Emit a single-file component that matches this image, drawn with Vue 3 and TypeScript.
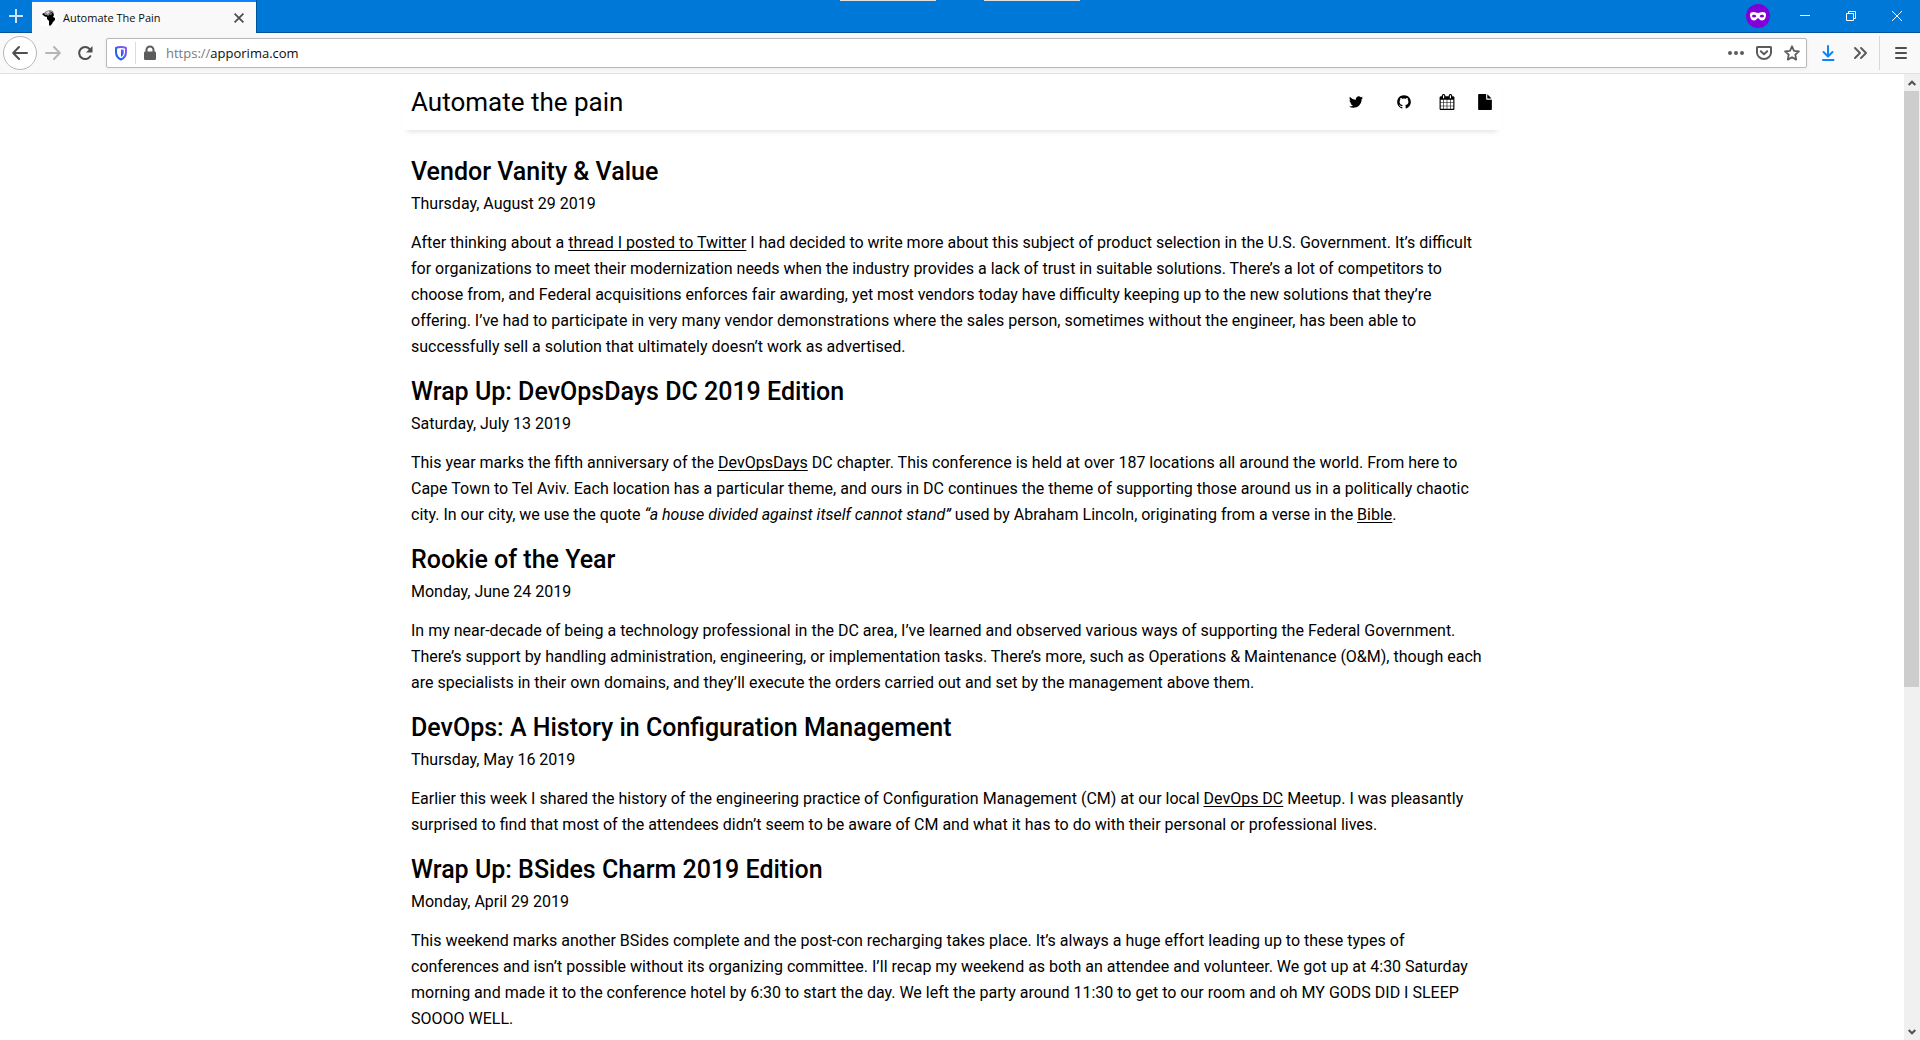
<script setup lang="ts">
interface Piece {
  text: string
  href?: string
  em?: boolean
}

interface Post {
  title: string
  date: string
  body: Piece[]
}

interface SiteLink {
  label: string
  href: string
  brand: boolean
  path: string
}

const siteLinks: SiteLink[] = [
  {
    label: 'Twitter',
    href: '#twitter',
    brand: true,
    path: 'M1684 408q-67 98-162 167 1 14 1 42 0 130-38 259.5t-115.5 248.5-184.5 210.5-258 146-323 54.5q-271 0-496-145 35 4 78 4 225 0 401-138-105-2-188-64.5t-114-159.5q33 5 61 5 43 0 85-11-112-23-185.5-111.5t-73.5-205.5v-4q68 38 146 41-66-44-105-115t-39-154q0-88 44-163 121 149 294.5 238.5t371.5 99.5q-8-38-8-74 0-134 94.5-228.5t228.5-94.5q140 0 236 102 109-21 205-78-37 115-142 178 93-10 186-50z',
  },
  {
    label: 'GitHub',
    href: '#github',
    brand: true,
    path: 'M896 128q209 0 385.5 103t279.5 279.5 103 385.5q0 251-146.5 451.5t-378.5 277.5q-27 5-40-7t-13-30q0-3 .5-76.5t.5-134.5q0-97-52-142 57-6 102.5-18t94-39 81-66.5 53-105 20.5-150.5q0-119-79-206 37-91-8-204-28-9-81 11t-92 44l-38 24q-93-26-192-26t-192 26q-16-11-42.5-27t-83.5-38.5-85-13.5q-45 113-8 204-79 87-79 206 0 85 20.5 150t52.5 105 80.5 67 94 39 102.5 18q-39 36-49 103-21 10-45 15t-57 5-65.5-21.5-55.5-62.5q-19-32-48.5-52t-49.5-24l-20-3q-21 0-29 4.5t-5 11.5 9 14 13 12l7 5q22 10 43.5 38t31.5 51l10 23q13 38 44 61.5t67 30 69.5 7 55.5-3.5l23-4q0 38 .5 88.5t.5 54.5q0 18-13 30t-40 7q-232-77-378.5-277.5t-146.5-451.5q0-209 103-385.5t279.5-279.5 385.5-103z',
  },
  {
    label: 'Calendar',
    href: '#calendar',
    brand: false,
    path: 'M192 1664h288v-288h-288v288zm352 0h320v-288h-320v288zm-352-352h288v-320h-288v320zm352 0h320v-320h-320v320zm-352-384h288v-288h-288v288zm736 736h320v-288h-320v288zm-384-736h320v-288h-320v288zm768 736h288v-288h-288v288zm-384-352h320v-320h-320v320zm-352-864v-288q0-13-9.5-22.5t-22.5-9.5h-64q-13 0-22.5 9.5t-9.5 22.5v288q0 13 9.5 22.5t22.5 9.5h64q13 0 22.5-9.5t9.5-22.5zm736 864h288v-320h-288v320zm-384-384h320v-288h-320v288zm384 0h288v-288h-288v288zm32-480v-288q0-13-9.5-22.5t-22.5-9.5h-64q-13 0-22.5 9.5t-9.5 22.5v288q0 13 9.5 22.5t22.5 9.5h64q13 0 22.5-9.5t9.5-22.5zm384-64v1280q0 52-38 90t-90 38h-1408q-52 0-90-38t-38-90v-1280q0-52 38-90t90-38h128v-96q0-66 47-113t113-47h64q66 0 113 47t47 113v96h384v-96q0-66 47-113t113-47h64q66 0 113 47t47 113v96h128q52 0 90 38t38 90z',
  },
  {
    label: 'Resume',
    href: '#resume',
    brand: false,
    path: 'M1152 512v-472q22 14 36 28l408 408q14 14 28 36h-472zm-128 32q0 40 28 68t68 28h544v1056q0 40-28 68t-68 28h-1344q-40 0-68-28t-28-68v-1600q0-40 28-68t68-28h800v544z',
  },
]

const posts: Post[] = [
  {
    title: 'Vendor Vanity & Value',
    date: 'Thursday, August 29 2019',
    body: [
      { text: 'After thinking about a ' },
      { text: 'thread I posted to Twitter', href: '#thread' },
      {
        text: ' I had decided to write more about this subject of product selection in the U.S. Government. It’s difficult for organizations to meet their modernization needs when the industry provides a lack of trust in suitable solutions. There’s a lot of competitors to choose from, and Federal acquisitions enforces fair awarding, yet most vendors today have difficulty keeping up to the new solutions that they’re offering. I’ve had to participate in very many vendor demonstrations where the sales person, sometimes without the engineer, has been able to successfully sell a solution that ultimately doesn’t work as advertised.',
      },
    ],
  },
  {
    title: 'Wrap Up: DevOpsDays DC 2019 Edition',
    date: 'Saturday, July 13 2019',
    body: [
      { text: 'This year marks the fifth anniversary of the ' },
      { text: 'DevOpsDays', href: '#devopsdays' },
      {
        text: ' DC chapter. This conference is held at over 187 locations all around the world. From here to Cape Town to Tel Aviv. Each location has a particular theme, and ours in DC continues the theme of supporting those around us in a politically chaotic city. In our city, we use the quote ',
      },
      { text: '“a house divided against itself cannot stand”', em: true },
      { text: ' used by Abraham Lincoln, originating from a verse in the ' },
      { text: 'Bible', href: '#bible' },
      { text: '.' },
    ],
  },
  {
    title: 'Rookie of the Year',
    date: 'Monday, June 24 2019',
    body: [
      {
        text: 'In my near-decade of being a technology professional in the DC area, I’ve learned and observed various ways of supporting the Federal Government. There’s support by handling administration, engineering, or implementation tasks. There’s more, such as Operations & Maintenance (O&M), though each are specialists in their own domains, and they’ll execute the orders carried out and set by the management above them.',
      },
    ],
  },
  {
    title: 'DevOps: A History in Configuration Management',
    date: 'Thursday, May 16 2019',
    body: [
      {
        text: 'Earlier this week I shared the history of the engineering practice of Configuration Management (CM) at our local ',
      },
      { text: 'DevOps DC', href: '#devopsdc' },
      {
        text: ' Meetup. I was pleasantly surprised to find that most of the attendees didn’t seem to be aware of CM and what it has to do with their personal or professional lives.',
      },
    ],
  },
  {
    title: 'Wrap Up: BSides Charm 2019 Edition',
    date: 'Monday, April 29 2019',
    body: [
      {
        text: 'This weekend marks another BSides complete and the post-con recharging takes place. It’s always a huge effort leading up to these types of conferences and isn’t possible without its organizing committee. I’ll recap my weekend as both an attendee and volunteer. We got up at 4:30 Saturday morning and made it to the conference hotel by 6:30 to start the day. We left the party around 11:30 to get to our room and oh MY GODS DID I SLEEP SOOOO WELL.',
      },
    ],
  },
]
</script>

<template>
  <div class="browser">
    <header class="titlebar">
      <div class="edge-marks"><span></span><span></span></div>
      <button class="new-tab" type="button" aria-label="New tab">
        <svg width="16" height="16" viewBox="0 0 16 16" fill="none" stroke="#c9e2f7" stroke-width="2">
          <path d="M8 1v14M1 8h14" />
        </svg>
      </button>
      <div class="tab">
        <svg width="16" height="16" viewBox="0 0 16 16" aria-hidden="true">
          <rect width="16" height="16" fill="#fff" />
          <path fill="#8a8a8a" d="M2 4 5 1l4-1 3 1 1 3-4 3-3-1-2 1z" />
          <path
            fill="#000"
            d="M1 4l2-1 1 2 2 0 1 1 2-2 1-2 2 1 1 2-1 2 2 1 0 2-2 2-1 2-2 2-1-1 0-4-2-2 0-2-3-1z"
          />
          <path fill="#d5d5d5" d="M5 2l3-1 0 2-2 1zM9 4l2-1-1 2z" />
        </svg>
        <span class="tab-title">Automate The Pain</span>
        <button class="tab-close" type="button" aria-label="Close tab">
          <svg width="10" height="10" viewBox="0 0 10 10" fill="none" stroke="#4a4a4b" stroke-width="1.7">
            <path d="M.6.6l8.8 8.8M9.4.6.6 9.4" />
          </svg>
        </button>
      </div>
      <div class="window-area">
        <svg class="private" width="24" height="24" viewBox="0 0 24 24" role="img" aria-label="Private browsing">
          <circle cx="12" cy="12" r="12" fill="#8000d7" />
          <path
            fill="#fff"
            fill-rule="evenodd"
            d="M4 10.5C4 8.8 5.5 8 7.5 8c2 0 3 .9 4.5.9S14.5 8 16.5 8c2 0 3.5.8 3.5 2.5 0 3-1.3 6-4 6-2.2 0-2.8-2.3-4-2.3s-1.8 2.3-4 2.3c-2.7 0-4-3-4-6zM5.8 12.2c.6.8 1.4 1.2 2.3 1.2 1 0 1.8-.4 2.3-1.2-.6-.9-1.4-1.4-2.3-1.4-1 0-1.8.5-2.3 1.4zm7.8 0c.5.8 1.3 1.2 2.3 1.2.9 0 1.7-.4 2.3-1.2-.5-.9-1.3-1.4-2.3-1.4-.9 0-1.7.5-2.3 1.4z"
          />
        </svg>
        <button class="win" type="button" aria-label="Minimize">
          <svg width="10" height="10" viewBox="0 0 10 10" fill="none" stroke="#fff"><path d="M0 4.5h10" /></svg>
        </button>
        <button class="win" type="button" aria-label="Restore">
          <svg width="10" height="10" viewBox="0 0 10 10" fill="none" stroke="#fff">
            <path d="M.5 2.5h7v7h-7zM2.5 2.5v-2h7v7h-2" />
          </svg>
        </button>
        <button class="win" type="button" aria-label="Close">
          <svg width="10" height="10" viewBox="0 0 10 10" fill="none" stroke="#fff"><path d="M0 0l10 10M10 0 0 10" /></svg>
        </button>
      </div>
    </header>

    <div class="toolbar">
      <button class="back" type="button" aria-label="Back">
        <svg width="16" height="16" viewBox="0 0 16 16" fill="none" stroke="#4f4f50" stroke-width="2" stroke-linecap="round" stroke-linejoin="round">
          <path d="M15 8H1.5M7 2 1.2 8 7 14" />
        </svg>
      </button>
      <button class="tool" type="button" aria-label="Forward">
        <svg width="16" height="16" viewBox="0 0 16 16" fill="none" stroke="#b5b5b6" stroke-width="2" stroke-linecap="round" stroke-linejoin="round">
          <path d="M1 8h13.5M9 2l5.8 6L9 14" />
        </svg>
      </button>
      <button class="tool" type="button" aria-label="Reload">
        <svg width="16" height="16" viewBox="0 0 16 16" fill="none">
          <path d="M13.3 11.2A6 6 0 1 1 12.6 4" stroke="#4f4f50" stroke-width="2" stroke-linecap="round" />
          <path d="M15.5 1v6.5H9z" fill="#4f4f50" />
        </svg>
      </button>
      <form class="urlbar" @submit.prevent>
        <svg class="shield" width="16" height="16" viewBox="0 0 16 16" aria-hidden="true">
          <defs>
            <linearGradient id="shield-tint" x1="0" y1="1" x2="1" y2="0">
              <stop offset="0" stop-color="#0060df" />
              <stop offset="1" stop-color="#9059ff" />
            </linearGradient>
          </defs>
          <path
            d="M8 2c2 0 3.700.3 5 1v4c0 3.500-2 6.300-5 7.500C5 13.300 3 10.500 3 7V3c1.300-.7 3-1 5-1z"
            fill="none"
            stroke="url(#shield-tint)"
            stroke-width="2"
          />
          <path d="M8 4.5c1.2 0 2 .1 2.8.4V7c0 2.2-1 4-2.8 5z" fill="url(#shield-tint)" />
        </svg>
        <span class="split"></span>
        <svg class="lock" width="16" height="16" viewBox="0 0 16 16" aria-hidden="true">
          <path d="M4.5 7V5a3.5 3.5 0 0 1 7 0v2" fill="none" stroke="#5c5c5d" stroke-width="2" />
          <rect x="2" y="6.5" width="12" height="8.5" rx="1.2" fill="#5c5c5d" />
        </svg>
        <label for="address">https://</label>
        <input id="address" type="text" value="apporima.com" spellcheck="false" />
        <button class="page-action" type="button" aria-label="Page actions">
          <svg width="16" height="16" viewBox="0 0 16 16" fill="#5c5c5d">
            <circle cx="2" cy="8" r="2" /><circle cx="8" cy="8" r="2" /><circle cx="14" cy="8" r="2" />
          </svg>
        </button>
        <button class="page-action" type="button" aria-label="Save to Pocket">
          <svg width="16" height="16" viewBox="0 0 16 16" fill="none" stroke="#5c5c5d" stroke-width="2" stroke-linecap="round" stroke-linejoin="round">
            <path d="M1.5 2h13c.3 0 .5.2.5.5V7.5a7 6.5 0 0 1-14 0V2.5c0-.3.2-.5.5-.5z" />
            <path d="M4.8 6.3 8 9.3l3.200-3" />
          </svg>
        </button>
        <button class="page-action" type="button" aria-label="Bookmark this page">
          <svg width="16" height="16" viewBox="0 0 16 16" fill="none" stroke="#5c5c5d" stroke-width="1.8" stroke-linejoin="round">
            <path d="M8 1.3l2 4.5 4.900.6-3.600 3.300.9 4.900L8 12.200l-4.200 2.400.9-4.900L1.100 6.400 6 5.800z" />
          </svg>
        </button>
      </form>
      <div class="tools-end">
        <button class="tool" type="button" aria-label="Downloads">
          <svg width="16" height="16" viewBox="0 0 16 16" fill="none" stroke="#0a84ff" stroke-width="2" stroke-linecap="round" stroke-linejoin="round">
            <path d="M8 1v10M3.5 7 8 11.5 12.5 7M3 15h10.5" />
          </svg>
        </button>
        <button class="tool" type="button" aria-label="More tools">
          <svg width="16" height="16" viewBox="0 0 16 16" fill="none" stroke="#5c5c5d" stroke-width="2" stroke-linecap="round" stroke-linejoin="round">
            <path d="M3 3l5 5-5 5M9 3l5 5-5 5" />
          </svg>
        </button>
        <span class="divider"></span>
        <button class="menu" type="button" aria-label="Open menu">
          <svg width="16" height="16" viewBox="0 0 16 16" stroke="#4f4f50" stroke-width="2" stroke-linecap="round">
            <path d="M3 3h10M3 8h10M3 13h10" />
          </svg>
        </button>
      </div>
    </div>

    <div class="viewport">
      <div class="page">
        <div class="column">
          <header class="site-header">
            <h1><a href="#home">Automate the pain</a></h1>
            <nav>
              <a v-for="link in siteLinks" :key="link.label" :href="link.href" :aria-label="link.label" :class="{ brand: link.brand }">
                <svg width="16" height="16" viewBox="0 0 1792 1792"><path :d="link.path" /></svg>
              </a>
            </nav>
          </header>
          <main>
            <article v-for="post in posts" :key="post.title">
              <h2>{{ post.title }}</h2>
              <time>{{ post.date }}</time>
              <p>
                <template v-for="(piece, i) in post.body" :key="i"
                  ><a v-if="piece.href" :href="piece.href">{{ piece.text }}</a
                  ><em v-else-if="piece.em">{{ piece.text }}</em
                  ><template v-else>{{ piece.text }}</template></template
                >
              </p>
            </article>
          </main>
        </div>
      </div>
      <div class="scrollbar">
        <button type="button" aria-label="Scroll up">
          <svg width="8" height="6" viewBox="0 0 8 6" fill="none" stroke="#505050" stroke-width="2"><path d="M.7 5 4 1.7 7.3 5" /></svg>
        </button>
        <div class="track"><div class="thumb"></div></div>
        <button type="button" aria-label="Scroll down">
          <svg width="8" height="6" viewBox="0 0 8 6" fill="none" stroke="#505050" stroke-width="2"><path d="M.7 1 4 4.3 7.3 1" /></svg>
        </button>
      </div>
    </div>
  </div>
</template>

<style>
body {
  margin: 0;
}
</style>

<style scoped>
.browser {
  display: flex;
  flex-direction: column;
  height: 100vh;
  background: #fff;
  color: #000;
  font-family: Roboto, sans-serif;
  font-size: 16px;
  line-height: 26px;
}

button {
  display: flex;
  align-items: center;
  justify-content: center;
  flex: none;
  margin: 0;
  padding: 0;
  border: 0;
  background: none;
}

svg {
  display: block;
  flex: none;
}

/* Title bar */
.titlebar {
  position: relative;
  display: flex;
  flex: none;
  height: 33px;
  box-sizing: border-box;
  background: #0078d7;
  font-family: "Open Sans", "Noto Sans", sans-serif;
  font-size: 11px;
}

.edge-marks {
  position: absolute;
  inset: 0 0 auto;
  display: flex;
  justify-content: center;
  gap: 48px;
}

.edge-marks span {
  width: 96px;
  height: 1px;
  background: #e1e1e1;
}

.new-tab {
  width: 32px;
  border-bottom: 1px solid #00549a;
}

.tab {
  display: flex;
  align-items: center;
  width: 224px;
  padding: 0 9px;
  box-sizing: border-box;
  border-top: 2px solid #0a84ff;
  background: #f9f9fa;
}

.tab-title {
  flex: 1;
  margin-left: 6px;
  color: #0c0c0d;
  white-space: nowrap;
}

.tab-close {
  width: 16px;
  height: 16px;
}

.window-area {
  display: flex;
  flex: 1;
  align-items: center;
  justify-content: flex-end;
  border-left: 1px solid #00549a;
  border-bottom: 1px solid #00549a;
}

.private {
  margin-right: 12px;
}

.win {
  width: 46px;
  height: 32px;
}

/* Toolbar */
.toolbar {
  display: flex;
  flex: none;
  align-items: center;
  height: 41px;
  padding: 0 3px;
  box-sizing: border-box;
  border-bottom: 1px solid #e0e0e1;
  background: #f9f9fa;
}

.back {
  width: 34px;
  height: 34px;
  border: 1px solid #b6b6b7;
  border-radius: 50%;
  background: #fff;
}

.tool {
  width: 32px;
  height: 32px;
}

.urlbar {
  display: flex;
  flex: 1;
  align-items: center;
  height: 30px;
  margin: 0 5px;
  padding: 0 0 0 1px;
  box-sizing: border-box;
  border: 1px solid #b9b9ba;
  border-radius: 2px;
  background: #fff;
  box-shadow: 0 1px 4px rgba(0, 0, 0, 0.06);
  font-family: "Open Sans", "Noto Sans", sans-serif;
  font-size: 13px;
}

.shield {
  margin: 0 6px 0 5px;
}

.split {
  width: 1px;
  height: 22px;
  background: #dcdcdd;
}

.lock {
  margin: 0 8px 0 6px;
}

.urlbar label {
  color: #7a7a7b;
}

.urlbar input {
  flex: 1;
  min-width: 0;
  padding: 0;
  border: 0;
  outline: 0;
  background: none;
  color: #0c0c0d;
  font: inherit;
}

.page-action {
  width: 28px;
  height: 28px;
}

.tools-end {
  display: flex;
  align-items: center;
}

.divider {
  width: 1px;
  height: 34px;
  margin: 0 5px 0 3px;
  background: #d8d8d9;
}

.menu {
  width: 32px;
  height: 32px;
}

/* Page */
.viewport {
  display: flex;
  flex: 1;
  min-height: 0;
}

.page {
  flex: 1;
  min-width: 0;
  overflow-y: auto;
  scrollbar-width: none;
}

.column {
  max-width: 1098px;
  margin: 0 auto;
}

.site-header {
  display: flex;
  align-items: center;
  justify-content: space-between;
  height: 56px;
  padding: 0 8px;
  box-shadow: 0 5px 6px -4px rgba(0, 0, 0, 0.14);
}

h1 {
  margin: 0;
  font-size: 26px;
  font-weight: 400;
  line-height: 34px;
}

h1 a {
  text-decoration: none;
}

a {
  color: inherit;
}

nav {
  display: flex;
  gap: 22px;
}

.brand {
  padding: 0 5px;
}

main {
  padding: 25px 8px 0;
}

article {
  margin-bottom: 15px;
}

h2 {
  margin: 0 0 2px;
  font-size: 25px;
  font-weight: 500;
  line-height: 34px;
}

time {
  display: block;
}

p {
  margin: 13px 0 0;
}

p a {
  text-decoration: underline;
  text-decoration-skip-ink: none;
  text-underline-offset: 2px;
}

/* Scrollbar */
.scrollbar {
  display: flex;
  flex: none;
  flex-direction: column;
  width: 16px;
  background: #f0f0f0;
}

.scrollbar button {
  width: 15px;
  height: 17px;
}

.track {
  flex: 1;
}

.thumb {
  width: 15px;
  height: 64%;
  background: #cdcdcd;
}
</style>
